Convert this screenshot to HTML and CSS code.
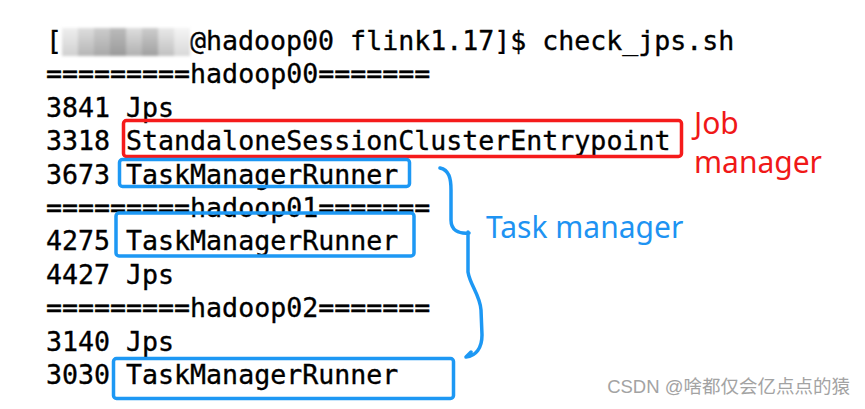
FILE: index.html
```html
<!DOCTYPE html>
<html lang="en">
<head>
<meta charset="utf-8">
<title>check_jps</title>
<link rel="stylesheet" href="styles.css">
</head>
<body>
<div class="canvas">
<pre class="term">[<span class="blur"><i class="c1"></i><i class="c2"></i><i class="c3"></i><i class="c4"></i><i class="c5"></i><i class="c6"></i><i class="c7"></i><i class="c8"></i></span>@hadoop00 flink1.17]$ check_jps.sh
=========hadoop00=======
3841 Jps
3318 StandaloneSessionClusterEntrypoint
3673 TaskManagerRunner
=========hadoop01=======
4275 TaskManagerRunner
4427 Jps
=========hadoop02=======
3140 Jps
3030 TaskManagerRunner</pre>
<svg class="marks" width="865" height="409" viewBox="0 0 865 409">
  <rect x="123.5" y="120.5" width="558" height="36" rx="3" fill="none" stroke="#f51b1b" stroke-width="3.5"/>
  <rect x="119.5" y="159.5" width="290" height="27" rx="3" fill="none" stroke="#1d98f4" stroke-width="3.5"/>
  <rect x="116" y="213" width="298" height="43" rx="3" fill="none" stroke="#1d98f4" stroke-width="3.5"/>
  <rect x="113.5" y="358.5" width="340" height="40" rx="3" fill="none" stroke="#1d98f4" stroke-width="3.5"/>
  <path d="M440,168 C449,170 451,178 451,190 L451,220 C451,230 458,234 469,233 M468,232 L468,272 C470,285 480,295 481,310 L482,335 C482,348 476,356 466,357 L471,352" fill="none" stroke="#1d98f4" stroke-width="3.5" stroke-linecap="round" stroke-linejoin="round"/>
</svg>
<div class="label job">Job<br>manager</div>
<div class="label task">Task manager</div>
<div class="watermark">CSDN @啥都仅会亿点点的猿</div>
</div>
</body>
</html>
```

FILE: styles.css
```css
html, body {
  margin: 0;
  padding: 0;
  background: #ffffff;
}

.canvas {
  position: relative;
  width: 865px;
  height: 409px;
  overflow: hidden;
  padding: 24px 0 0 46px;
  box-sizing: border-box;
}

.term {
  margin: 0;
  font-family: "DejaVu Sans Mono", monospace;
  font-size: 26.6px;
  line-height: 33.4px;
  color: #000;
  -webkit-text-stroke: 0.35px #000;
}

.blur {
  display: inline-flex;
  width: 128px;
  height: 28px;
  vertical-align: -6px;
  filter: blur(1.5px);
}

.blur i {
  flex: 1;
  height: 100%;
}
.blur .c1 { background: linear-gradient(#eee, #d0d0d0); }
.blur .c2 { background: linear-gradient(#ddd, #b5b5b5); }
.blur .c3 { background: linear-gradient(#ccc, #a8a8a8); }
.blur .c4 { background: linear-gradient(#bbb, #9a9a9a); }
.blur .c5 { background: linear-gradient(#ddd, #b0b0b0); }
.blur .c6 { background: linear-gradient(#ccc, #a0a0a0); }
.blur .c7 { background: linear-gradient(#e8e8e8, #c0c0c0); }
.blur .c8 { background: linear-gradient(#f4f4f4, #d8d8d8); }

.marks {
  position: absolute;
  left: 0;
  top: 0;
}

.label {
  position: absolute;
  font-family: "Noto Sans", "Open Sans", sans-serif;
  font-size: 30px;
  line-height: 39px;
}

.job {
  left: 694px;
  top: 103px;
  color: #f01818;
}

.task {
  left: 486px;
  top: 207px;
  color: #1e93f2;
}

.watermark {
  position: absolute;
  right: 15px;
  top: 375px;
  font-family: "Liberation Sans", "Noto Sans CJK SC", sans-serif;
  font-size: 18.5px;
  line-height: 24px;
  color: #a3a3a3;
}
```
